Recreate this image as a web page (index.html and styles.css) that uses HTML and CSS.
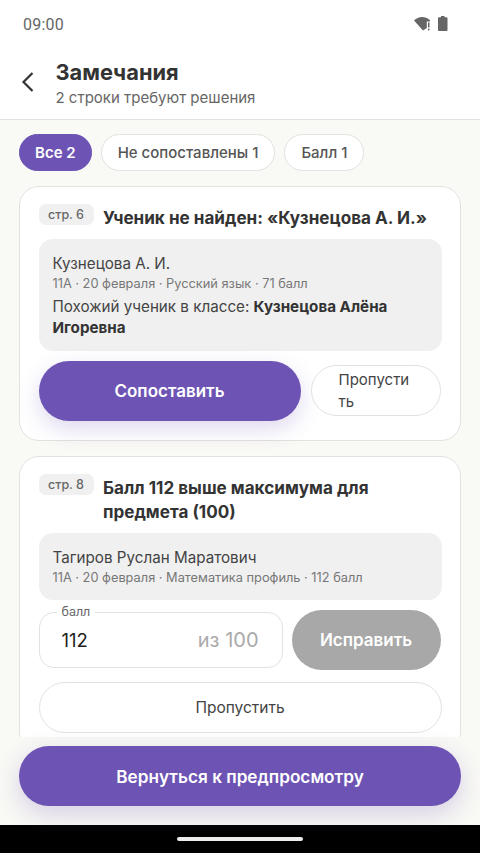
FILE: index.html
```html
<!DOCTYPE html>
<html lang="ru">
<head>
<meta charset="utf-8">
<title>Замечания</title>
<link rel="stylesheet" href="styles.css">
</head>
<body>
<div class="screen">
  <div class="status">
    <span class="time">09:00</span>
    <span class="status-icons">
      <svg width="17" height="15" viewBox="0 0 17 15"><path d="M0 4.500C2.300 2.300 5.200 1 8 1c2.800 0 5.600 1.100 8 3.300v1.200h-3.200V12L9 14.500Z" fill="#666"/><rect x="14" y="6.500" width="1.500" height="5" fill="#666"/><rect x="14" y="12.700" width="1.500" height="1.700" fill="#666"/></svg>
      <svg width="10" height="15" viewBox="0 0 10 15"><path d="M3 0h3.500v1.300h2a1 1 0 0 1 1 1V14a1 1 0 0 1-1 1H1a1 1 0 0 1-1-1V2.300a1 1 0 0 1 1-1h2Z" fill="#666"/></svg>
    </span>
  </div>
  <header class="appbar">
    <svg class="back" width="14" height="22" viewBox="0 0 14 22"><path d="M11.500 2 2.500 11l9 9" fill="none" stroke="#333" stroke-width="2.200"/></svg>
    <div class="titles">
      <h1>Замечания</h1>
      <p>2 строки требуют решения</p>
    </div>
  </header>
  <main class="content">
    <div class="chips">
      <span class="chip active">Все 2</span>
      <span class="chip">Не сопоставлены 1</span>
      <span class="chip">Балл 1</span>
    </div>
    <section class="card">
      <div class="card-head">
        <span class="tag">стр. 6</span>
        <h2>Ученик не найден: «Кузнецова А. И.»</h2>
      </div>
      <div class="info">
        <div class="name">Кузнецова А. И.</div>
        <div class="meta">11А · 20 февраля · Русский язык · 71 балл</div>
        <div class="name hint">Похожий ученик в классе: <b>Кузнецова Алёна Игоревна</b></div>
      </div>
      <div class="actions">
        <button class="btn primary">Сопоставить</button>
        <button class="btn ghost narrow">Пропустить</button>
      </div>
    </section>
    <section class="card">
      <div class="card-head">
        <span class="tag">стр. 8</span>
        <h2>Балл 112 выше максимума для предмета (100)</h2>
      </div>
      <div class="info">
        <div class="name">Тагиров Руслан Маратович</div>
        <div class="meta">11А · 20 февраля · Математика профиль · 112 балл</div>
      </div>
      <div class="fix-row">
        <div class="field">
          <span class="field-label">балл</span>
          <span class="field-value">112</span>
          <span class="field-suffix">из 100</span>
        </div>
        <button class="btn disabled">Исправить</button>
      </div>
      <button class="btn ghost wide">Пропустить</button>
    </section>
  </main>
  <div class="footer">
    <button class="btn primary back-btn">Вернуться к предпросмотру</button>
  </div>
  <div class="nav"><span class="handle"></span></div>
</div>
</body>
</html>
```
FILE: styles.css
```css
* { box-sizing: border-box; }
html, body { margin: 0; padding: 0; }
body { width: 480px; height: 853px; overflow: hidden; font-family: Inter, "Noto Sans", sans-serif; color: #333; }
.screen { width: 480px; height: 853px; display: flex; flex-direction: column; background: #f9f9f5; }
.status { height: 48px; flex: none; background: #fff; display: flex; align-items: center; justify-content: space-between; padding: 0 32px 0 23px; }
.time { font: 400 16px Roboto, sans-serif; color: #666; letter-spacing: .2px; }
.status-icons { display: flex; align-items: center; gap: 7px; margin-top: -1px; }
.appbar { height: 72px; flex: none; background: #fff; border-bottom: 1.500px solid #e2e2e0; display: flex; align-items: flex-start; padding: 0 0 0 21px; }
.back { margin-top: 23px; }
.titles { margin-left: 20.500px; padding-top: 10px; }
h1 { margin: 0; font-size: 21.800px; line-height: 28px; font-weight: 700; color: #333; }
.titles p { margin: 2px 0 0; font-size: 15px; line-height: 20px; color: #666; }
.content { flex: 1; min-height: 0; overflow: hidden; padding: 14px 19px 0; }
.chips { display: flex; gap: 9px; margin-bottom: 15px; }
.chip { height: 37px; padding: 0 16px; border-radius: 19px; background: #fff; border: 1.500px solid #e2e2e0; font-size: 15px; font-weight: 500; color: #555; display: flex; align-items: center; }
.chip.active { padding: 0 15px; background: #6c53b4; border-color: #6c53b4; color: #fff; font-weight: 600; }
.card { background: #fff; border: 1.500px solid #e2e2e0; border-radius: 20px; padding: 19px 18.500px 19px; margin-bottom: 15.500px; }
.card-head { display: flex; gap: 9.500px; align-items: flex-start; margin-bottom: 9px; }
.tag { flex: none; height: 21px; width: 55px; margin-top: -2px; border-radius: 7px; background: #f0f0f0; font-size: 12.500px; font-weight: 500; color: #666; display: flex; align-items: center; justify-content: center; }
h2 { margin: 0; font-size: 17.100px; line-height: 24px; font-weight: 700; color: #333; }
.info { background: #f0f0f0; border-radius: 14px; padding: 14px 14px 13px; }
.name { font-size: 15.200px; line-height: 21px; color: #444; }
.meta { font-size: 12.800px; line-height: 18px; color: #777; margin-top: 1px; }
.hint { margin-top: 3px; }
.hint b { font-weight: 700; color: #333; }
.btn { font-family: inherit; border: 0; display: block; border-radius: 30px; }
.primary { background: #6c53b4; color: #fff; font-weight: 600; font-size: 17px; box-shadow: 0 8px 22px rgba(108, 83, 180, .22); }
.ghost { background: #fff; border: 1.500px solid #e2e2e0; color: #444; font-size: 15.500px; }
.actions { display: flex; gap: 10px; align-items: center; margin-top: 9.500px; }
.actions .primary { flex: none; width: 262px; height: 60px; }
.narrow { flex: none; width: 130px; height: 51px; padding: 0 27px; line-height: 22px; text-align: left; word-break: break-all; font-size: 15px; }
.fix-row { display: flex; gap: 9px; align-items: center; margin-top: 10px; }
.field { position: relative; flex: none; width: 244px; height: 56px; border: 1.500px solid #e2e2e0; border-radius: 15px; display: flex; align-items: center; justify-content: space-between; padding: 0 23px 0 22px; }
.field-label { position: absolute; left: 17px; top: -8px; background: #fff; padding: 0 5px; font-size: 12.500px; line-height: 14px; color: #666; }
.field-value { font-size: 18.500px; color: #222; }
.field-suffix { font-size: 20px; color: #aaa; }
.disabled { flex: none; width: 149px; height: 60px; background: #a8a8a8; color: #fff; font-size: 17px; font-weight: 600; }
.wide { width: 100%; height: 51px; margin-top: 12px; }
.footer { position: relative; flex: none; height: 88px; background: #f9f9f5; padding: 9px 19px 0; }
.back-btn { width: 442px; height: 60px; font-size: 17.200px; box-shadow: 0 8px 24px rgba(108, 83, 180, .25); }
.nav { height: 28px; flex: none; background: #000; display: flex; align-items: center; justify-content: center; }
.handle { width: 126px; height: 4px; border-radius: 2px; background: #eee; }
```
